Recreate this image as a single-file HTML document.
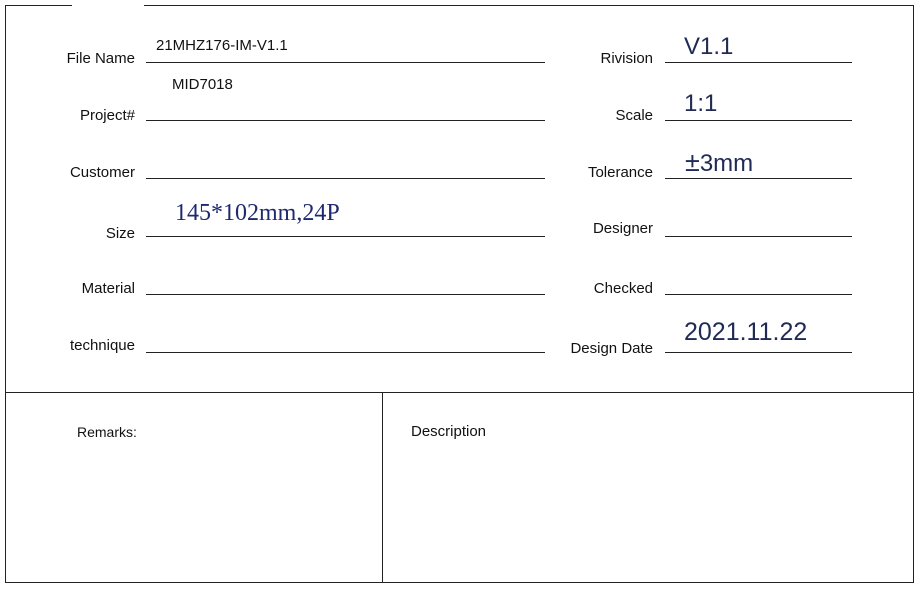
<!DOCTYPE html><html><head><style>
body{margin:0;width:920px;height:590px;background:#fff;position:relative;font-family:"Liberation Sans",Arial,sans-serif;overflow:hidden}
.a{position:absolute}
.h{position:absolute;height:1px;background:#222}
.v{position:absolute;width:1px;background:#222}
.l{position:absolute;font-size:15px;color:#111;text-align:right;line-height:16px}
.t{position:absolute;color:#1f2a55;font-size:24px;line-height:24px}
</style></head><body>
<div class="h" style="left:5px;top:5px;width:67px"></div>
<div class="h" style="left:144px;top:5px;width:770px"></div>
<div class="v" style="left:5px;top:5px;height:578px"></div>
<div class="v" style="left:913px;top:5px;height:578px"></div>
<div class="h" style="left:5px;top:582px;width:909px"></div>
<div class="h" style="left:5px;top:392px;width:909px"></div>
<div class="v" style="left:382px;top:392px;height:190px"></div>

<div class="h" style="left:146px;top:62px;width:399px"></div>
<div class="h" style="left:146px;top:120px;width:399px"></div>
<div class="h" style="left:146px;top:178px;width:399px"></div>
<div class="h" style="left:146px;top:236px;width:399px"></div>
<div class="h" style="left:146px;top:294px;width:399px"></div>
<div class="h" style="left:146px;top:352px;width:399px"></div>
<div class="h" style="left:665px;top:62px;width:187px"></div>
<div class="h" style="left:665px;top:120px;width:187px"></div>
<div class="h" style="left:665px;top:178px;width:187px"></div>
<div class="h" style="left:665px;top:236px;width:187px"></div>
<div class="h" style="left:665px;top:294px;width:187px"></div>
<div class="h" style="left:665px;top:352px;width:187px"></div>

<div class="l" style="right:785px;top:51px">File Name</div>
<div class="l" style="right:785px;top:108px">Project#</div>
<div class="l" style="right:785px;top:165px">Customer</div>
<div class="l" style="right:785px;top:226px">Size</div>
<div class="l" style="right:785px;top:281px">Material</div>
<div class="l" style="right:785px;top:338px">technique</div>
<div class="l" style="right:267px;top:51px">Rivision</div>
<div class="l" style="right:267px;top:108px">Scale</div>
<div class="l" style="right:267px;top:165px">Tolerance</div>
<div class="l" style="right:267px;top:221px">Designer</div>
<div class="l" style="right:267px;top:281px">Checked</div>
<div class="l" style="right:267px;top:341px">Design Date</div>

<div class="l" style="left:156px;top:38px;text-align:left">21MHZ176-IM-V1.1</div>
<div class="l" style="left:172px;top:77px;text-align:left">MID7018</div>
<div class="a" style="left:175px;top:200px;font-family:'Liberation Serif',serif;font-size:24px;color:#1f2a6e">145*102mm,24P</div>
<div class="t" style="left:684px;top:35px">V1.1</div>
<div class="t" style="left:684px;top:92px">1:1</div>
<div class="t" style="left:685px;top:150px"><span style="font-size:27px">±</span>3mm</div>
<div class="t" style="left:684px;top:320px;font-size:25px">2021.11.22</div>

<div class="l" style="left:77px;top:424px;text-align:left;font-size:14px">Remarks:</div>
<div class="l" style="left:411px;top:424px;text-align:left">Description</div>
</body></html>
